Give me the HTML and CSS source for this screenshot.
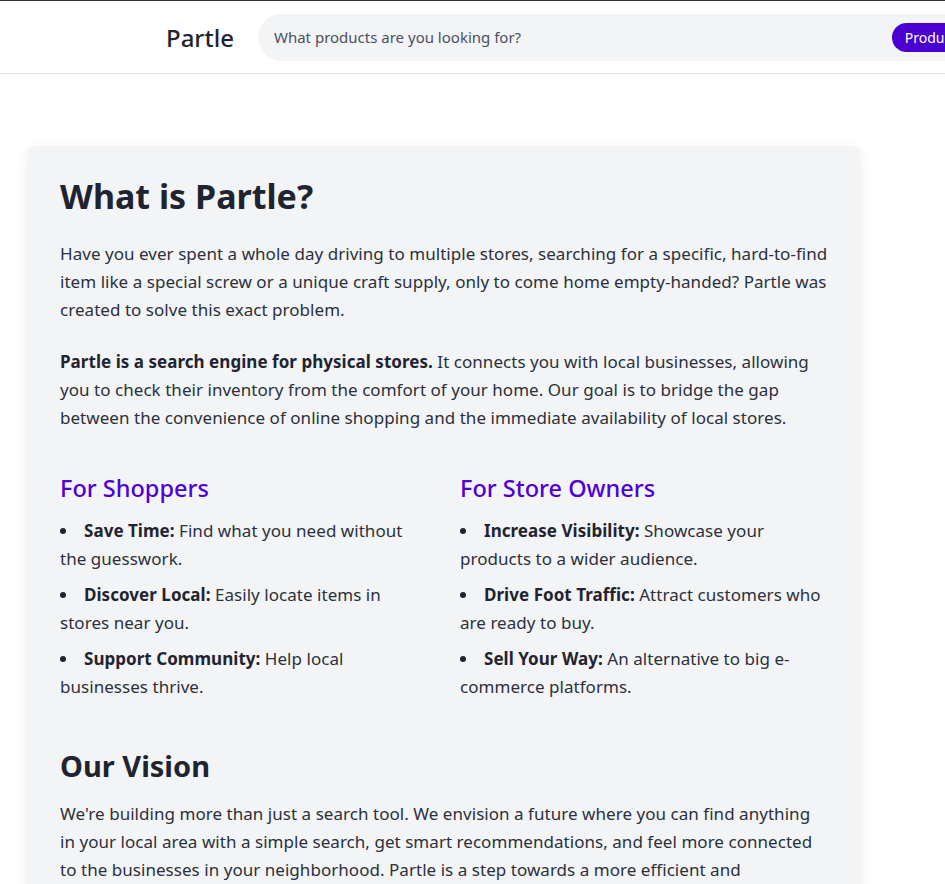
FILE: index.html
```html
<!DOCTYPE html>
<html lang="en">
<head>
<meta charset="utf-8">
<title>Partle - About</title>
<link rel="stylesheet" href="styles.css">
</head>
<body>
<header class="topbar">
  <div class="brand">Partle</div>
  <form class="search">
    <span class="search-placeholder">What products are you looking for?</span>
    <button type="button" class="search-mode">Products</button>
  </form>
</header>
<main class="page">
  <section class="card">
    <h1 class="title">What is Partle?</h1>
    <p class="text">Have you ever spent a whole day driving to multiple stores, searching for a specific, hard-to-find item like a special screw or a unique craft supply, only to come home empty-handed? Partle was created to solve this exact problem.</p>
    <p class="text"><strong>Partle is a search engine for physical stores.</strong> It connects you with local businesses, allowing you to check their inventory from the comfort of your home. Our goal is to bridge the gap between the convenience of online shopping and the immediate availability of local stores.</p>
    <div class="columns">
      <div class="col">
        <h2 class="subtitle">For Shoppers</h2>
        <ul class="list">
          <li><strong>Save Time:</strong> Find what you need without the guesswork.</li>
          <li><strong>Discover Local:</strong> Easily locate items in stores near you.</li>
          <li><strong>Support Community:</strong> Help local businesses thrive.</li>
        </ul>
      </div>
      <div class="col">
        <h2 class="subtitle">For Store Owners</h2>
        <ul class="list">
          <li><strong>Increase Visibility:</strong> Showcase your products to a wider audience.</li>
          <li><strong>Drive Foot Traffic:</strong> Attract customers who are ready to buy.</li>
          <li><strong>Sell Your Way:</strong> An alternative to big e-commerce platforms.</li>
        </ul>
      </div>
    </div>
    <h2 class="section-title">Our Vision</h2>
    <p class="text">We're building more than just a search tool. We envision a future where you can find anything in your local area with a simple search, get smart recommendations, and feel more connected to the businesses in your neighborhood. Partle is a step towards a more efficient and connected shopping experience.</p>
  </section>
</main>
</body>
</html>
```
FILE: styles.css
```css
html, body {
  margin: 0;
  padding: 0;
}
body {
  font-family: "Noto Sans", "DejaVu Sans", sans-serif;
  color: #2b303b;
  background: #ffffff;
  border-top: 1px solid #333;
  overflow: hidden;
}
.topbar {
  display: flex;
  align-items: center;
  height: 72px;
  border-bottom: 1px solid #e5e7eb;
  padding-left: 166px;
  gap: 24px;
  overflow: hidden;
  white-space: nowrap;
}
.brand {
  font-size: 24px;
  font-weight: 500;
  color: #1f2430;
  flex: none;
}
.search {
  flex: none;
  width: 760px;
  height: 47px;
  margin: 0;
  background: #f3f4f6;
  border-radius: 24px;
  display: flex;
  align-items: center;
  padding: 0 16px;
  box-sizing: border-box;
}
.search-placeholder {
  flex: 1;
  font-size: 15px;
  color: #4b5060;
}
.search-mode {
  flex: none;
  height: 29px;
  border: 0;
  border-radius: 15px;
  background: #4a00d0;
  color: #fff;
  font-family: inherit;
  font-size: 14px;
  padding: 0 13px;
  margin-right: 26px;
}
.page {
  padding: 72px 85px 0 28px;
}
.card {
  background: #f3f4f6;
  border-radius: 8px;
  box-shadow: 0 4px 14px rgba(0,0,0,0.08);
  padding: 28px 32px 40px;
}
.title {
  font-size: 34px;
  font-weight: 700;
  color: #1f2430;
  margin: 0 0 22px;
  line-height: 44px;
}
.text {
  font-size: 17px;
  line-height: 28px;
  letter-spacing: 0.04px;
  margin: 0 0 24px;
}
.text strong, .list strong {
  font-weight: 700;
  color: #1f2430;
}
.columns {
  display: grid;
  grid-template-columns: 1fr 1fr;
  gap: 32px;
  margin-top: 40px;
}
.subtitle {
  font-size: 23.5px;
  font-weight: 500;
  color: #4f00d6;
  margin: 0 0 13px;
  line-height: 32px;
}
.list {
  list-style: disc inside;
  margin: 0;
  padding: 0;
  font-size: 17px;
  line-height: 28px;
  letter-spacing: 0.04px;
}
.list li {
  margin-bottom: 8px;
}
.list li::marker {
  color: #1f2430;
}
.section-title {
  font-size: 29px;
  font-weight: 700;
  color: #1f2430;
  margin: 38px 0 15px;
  line-height: 38px;
}
```
